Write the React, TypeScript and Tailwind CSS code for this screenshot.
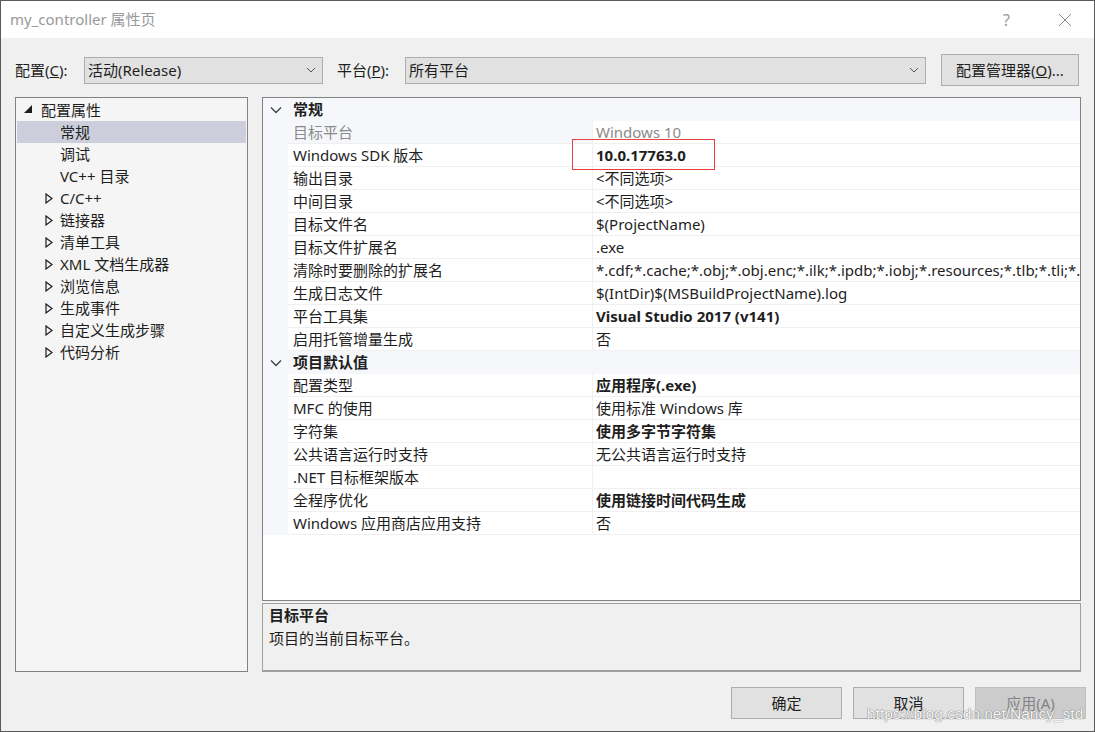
import React from "react";

type Row = { n: string; v: string; b?: boolean; dim?: boolean; sel?: boolean };

const general: Row[] = [
  { n: "目标平台", v: "Windows 10", dim: true, sel: true },
  { n: "Windows SDK 版本", v: "10.0.17763.0", b: true },
  { n: "输出目录", v: "<不同选项>" },
  { n: "中间目录", v: "<不同选项>" },
  { n: "目标文件名", v: "$(ProjectName)" },
  { n: "目标文件扩展名", v: ".exe" },
  {
    n: "清除时要删除的扩展名",
    v: "*.cdf;*.cache;*.obj;*.obj.enc;*.ilk;*.ipdb;*.iobj;*.resources;*.tlb;*.tli;*.tlh;*.tmp;*.rsp;*.pgc;*.pgd;*.meta;*.tlog;*.manifest;*.res;*.pch;*.exp;*.idb;*.rep;*.xdc;*.pdb",
  },
  { n: "生成日志文件", v: "$(IntDir)$(MSBuildProjectName).log" },
  { n: "平台工具集", v: "Visual Studio 2017 (v141)", b: true },
  { n: "启用托管增量生成", v: "否" },
];

const defaults: Row[] = [
  { n: "配置类型", v: "应用程序(.exe)", b: true },
  { n: "MFC 的使用", v: "使用标准 Windows 库" },
  { n: "字符集", v: "使用多字节字符集", b: true },
  { n: "公共语言运行时支持", v: "无公共语言运行时支持" },
  { n: ".NET 目标框架版本", v: "" },
  { n: "全程序优化", v: "使用链接时间代码生成", b: true },
  { n: "Windows 应用商店应用支持", v: "否" },
];

const treeChildren = ["常规", "调试", "VC++ 目录"];
const treeCollapsed = ["C/C++", "链接器", "清单工具", "XML 文档生成器", "浏览信息", "生成事件", "自定义生成步骤", "代码分析"];

function Chevron() {
  return (
    <svg width="10" height="6" viewBox="0 0 10 6" className="shrink-0">
      <path d="M1 1 L5 5 L9 1" fill="none" stroke="#555" strokeWidth="1" />
    </svg>
  );
}

function CatChevron() {
  return (
    <svg width="12" height="8" viewBox="0 0 12 8">
      <path d="M1 1.5 L6 6.5 L11 1.5" fill="none" stroke="#444" strokeWidth="1.4" />
    </svg>
  );
}

function Expanded() {
  return (
    <svg width="8" height="8" viewBox="0 0 8 8">
      <polygon points="8,0 8,8 0,8" fill="#1e1e1e" />
    </svg>
  );
}

function Collapsed() {
  return (
    <svg width="8" height="11" viewBox="0 0 8 11">
      <polygon points="1,1 7,5.5 1,10" fill="none" stroke="#1e1e1e" strokeWidth="1.2" strokeLinejoin="miter" />
    </svg>
  );
}

function Category({ t }: { t: string }) {
  return (
    <div className="flex h-[23px] bg-[#f5f7fa] items-center shrink-0">
      <div className="w-[25px] flex justify-center pl-[1px]">
        <CatChevron />
      </div>
      <div className="pl-[5px] font-bold text-[#1e1e1e] leading-[23px]">{t}</div>
    </div>
  );
}

function Prop({ r }: { r: Row }) {
  return (
    <div className="flex h-[23px] shrink-0">
      <div className="w-[25px] bg-[#f5f7fa] shrink-0" />
      <div
        className={
          "w-[305px] shrink-0 pl-[5px] pt-[1px] leading-[21px] border-b border-r border-[#f0f0f0] whitespace-nowrap overflow-hidden " +
          (r.sel ? "bg-[#f5f7fa] text-[#8a8a8a]" : "bg-white text-[#1e1e1e]")
        }
      >
        {r.n}
      </div>
      <div
        className={
          "flex-1 min-w-0 pl-[3px] pt-[1px] leading-[21px] border-b border-[#f0f0f0] bg-white whitespace-nowrap overflow-hidden " +
          (r.dim ? "text-[#8a8a8a] " : "text-[#1e1e1e] ") +
          (r.b ? "font-bold" : "")
        }
      >
        {r.v}
      </div>
    </div>
  );
}

export default function App() {
  return (
    <div className="relative w-[1095px] h-[732px] bg-[#f0f0f0] border border-[#5a5a5a] flex flex-col text-[15px] text-[#1e1e1e] font-[family-name:'Noto_Sans','Noto_Sans_CJK_SC',sans-serif] overflow-hidden">
      {/* title bar */}
      <div className="h-[37px] bg-white flex items-center shrink-0">
        <div className="pl-[9px] text-[#999999] text-[15px]">my_controller 属性页</div>
        <div className="flex-1" />
        <div className="text-[#999999] text-[16px] mr-[48px]">?</div>
        <svg width="14" height="14" viewBox="0 0 14 14" className="mr-[22px]">
          <path d="M1 1 L13 13 M13 1 L1 13" stroke="#8a8a8a" strokeWidth="1" />
        </svg>
      </div>

      {/* config row */}
      <div className="flex items-center h-[32px] mt-[16px] shrink-0">
        <div className="pl-[14px] w-[83px]">
          配置(<span className="underline">C</span>):
        </div>
        <div className="w-[239px] h-[27px] bg-[#e1e1e1] border border-[#adadad] flex items-center pl-[3px] pr-[6px]">
          <span className="flex-1">活动(Release)</span>
          <Chevron />
        </div>
        <div className="pl-[14px] w-[82px]">
          平台(<span className="underline">P</span>):
        </div>
        <div className="w-[521px] h-[27px] bg-[#e1e1e1] border border-[#adadad] flex items-center pl-[3px] pr-[6px]">
          <span className="flex-1">所有平台</span>
          <Chevron />
        </div>
        <div className="ml-[15px] w-[138px] h-[32px] bg-[#e1e1e1] border border-[#adadad] flex items-center justify-center">
          配置管理器(<span className="underline">O</span>)...
        </div>
      </div>

      {/* main */}
      <div className="flex mt-[11px] pl-[14px] h-[575px] shrink-0">
        {/* tree */}
        <div className="w-[233px] h-full bg-[#f5f5f5] border border-[#828282] p-[1px]">
          <div className="h-[22px] flex items-center">
            <div className="w-[23px] flex justify-end pr-[8px] pb-[2px]">
              <Expanded />
            </div>
            <span className="pl-[1px] leading-[22px]">配置属性</span>
          </div>
          {treeChildren.map((t, i) => (
            <div
              key={t}
              className={"h-[22px] flex items-center pl-[43px] leading-[22px] " + (i === 0 ? "bg-[#cccedb]" : "")}
            >
              {t}
            </div>
          ))}
          {treeCollapsed.map((t) => (
            <div key={t} className="h-[22px] flex items-center leading-[22px]">
              <div className="w-[43px] flex justify-start pl-[28px]">
                <Collapsed />
              </div>
              <span>{t}</span>
            </div>
          ))}
        </div>

        {/* right column */}
        <div className="ml-[14px] w-[819px] flex flex-col">
          <div className="h-[504px] bg-white border border-[#828282] flex flex-col overflow-hidden">
            <Category t="常规" />
            {general.map((r) => (
              <Prop key={r.n} r={r} />
            ))}
            <Category t="项目默认值" />
            {defaults.map((r) => (
              <Prop key={r.n} r={r} />
            ))}
          </div>
          <div className="mt-[2px] h-[69px] bg-[#f0f0f0] border border-b-2 border-[#a0a0a0] pl-[6px]">
            <div className="font-bold leading-[22px]">目标平台</div>
            <div className="leading-[24px]">项目的当前目标平台。</div>
          </div>
        </div>
      </div>

      {/* buttons */}
      <div className="flex justify-end gap-[11px] mt-[15px] pr-[8px]">
        <div className="w-[111px] h-[32px] bg-[#e1e1e1] border border-[#adadad] flex items-center justify-center">确定</div>
        <div className="w-[111px] h-[32px] bg-[#e1e1e1] border border-[#adadad] flex items-center justify-center">取消</div>
        <div className="w-[111px] h-[32px] bg-[#cccccc] border border-[#bfbfbf] flex items-center justify-center text-[#838383]">
          应用(A)
        </div>
      </div>

      {/* annotation box */}
      <div className="absolute left-[571px] top-[138px] w-[143px] h-[31px] border border-[#e8413f] pointer-events-none" />

      {/* watermark */}
      <div className="absolute left-[866px] top-[701px] text-[15.5px] text-[#f6f6f6] font-[family-name:'Liberation_Sans',sans-serif] [text-shadow:0_0_1px_#777,0_0_1px_#777] whitespace-nowrap">
        https://blog.csdn.net/Nancy_std
      </div>
    </div>
  );
}
